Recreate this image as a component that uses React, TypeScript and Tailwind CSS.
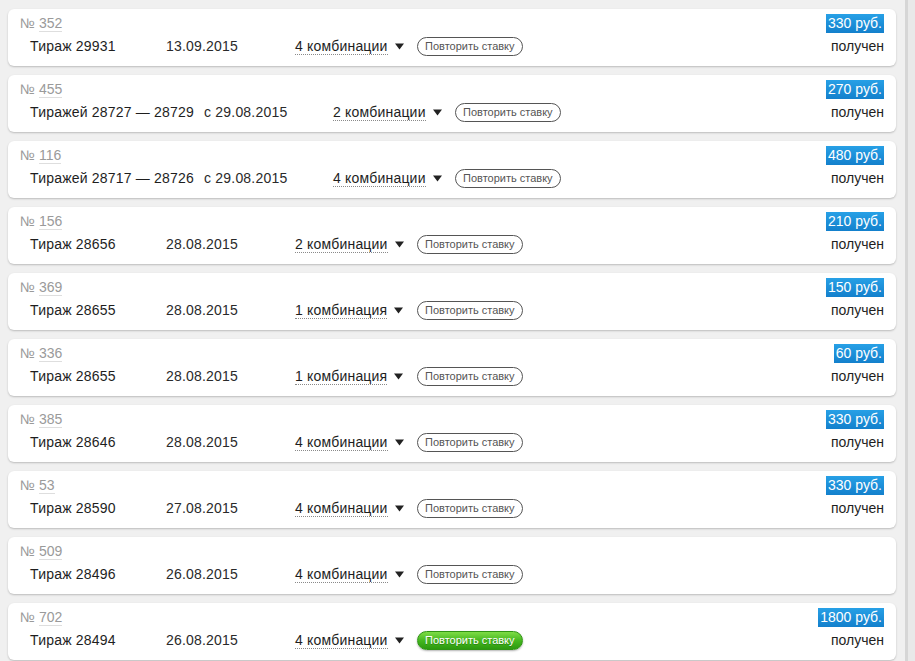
import React from 'react';

type Bet = {
  id: number;
  draw: string;
  date: string;
  combos: string;
  prize?: number;
  active?: boolean;
};

const bets: Bet[] = [
  { id: 352, draw: 'Тираж 29931', date: '13.09.2015', combos: '4 комбинации', prize: 330 },
  { id: 455, draw: 'Тиражей 28727 — 28729', date: 'с 29.08.2015', combos: '2 комбинации', prize: 270 },
  { id: 116, draw: 'Тиражей 28717 — 28726', date: 'с 29.08.2015', combos: '4 комбинации', prize: 480 },
  { id: 156, draw: 'Тираж 28656', date: '28.08.2015', combos: '2 комбинации', prize: 210 },
  { id: 369, draw: 'Тираж 28655', date: '28.08.2015', combos: '1 комбинация', prize: 150 },
  { id: 336, draw: 'Тираж 28655', date: '28.08.2015', combos: '1 комбинация', prize: 60 },
  { id: 385, draw: 'Тираж 28646', date: '28.08.2015', combos: '4 комбинации', prize: 330 },
  { id: 53, draw: 'Тираж 28590', date: '27.08.2015', combos: '4 комбинации', prize: 330 },
  { id: 509, draw: 'Тираж 28496', date: '26.08.2015', combos: '4 комбинации' },
  { id: 702, draw: 'Тираж 28494', date: '26.08.2015', combos: '4 комбинации', prize: 1800, active: true },
];

const Arrow = () => (
  <svg width="9" height="7" viewBox="0 0 9 7" className="ml-[7px]">
    <path d="M0 0.5 H9 L4.5 6.5 Z" fill="#222" />
  </svg>
);

const BetCard: React.FC<{ bet: Bet }> = ({ bet }) => (
  <div className="flex h-[57px] rounded-[6px] bg-white pt-[5px] pb-[10px] pl-[12px] pr-[12px] shadow-[0_1px_2px_rgba(0,0,0,0.22)]">
    <div className="flex flex-1 flex-col gap-[4px]">
      <div className="flex h-[19px] items-center text-[14px] text-[#9a9a9a]">
        <span>№</span>
        <span className="ml-[4px] border-b border-[#dedede] leading-[15px]">{bet.id}</span>
      </div>
      <div className="flex h-[19px] items-center pl-[10px] text-[14px] tracking-[0.2px] text-[#1e1e1e]">
        <span className="min-w-[136px] pr-[10px]">{bet.draw}</span>
        <span className="w-[129px] text-[#2a2a2a]">{bet.date}</span>
        <span className="flex w-[122px] items-center">
          <span className="border-b border-dotted border-[#8a8a8a] leading-[15px]">{bet.combos}</span>
          <Arrow />
        </span>
        {bet.active ? (
          <button className="flex h-[19px] items-center rounded-full border border-[#2f9414] bg-gradient-to-b from-[#7ddc45] via-[#45b81f] to-[#2c9a0f] px-[7px] text-[11px] tracking-normal text-white shadow-[0_1px_2px_rgba(0,0,0,0.3)] [text-shadow:0_1px_0_rgba(0,0,0,0.25)]">
            Повторить ставку
          </button>
        ) : (
          <button className="flex h-[19px] items-center rounded-full border border-[#555] bg-white px-[7px] text-[11px] tracking-normal text-[#555]">
            Повторить ставку
          </button>
        )}
      </div>
    </div>
    <div className="flex flex-col items-end gap-[4px]">
      <div className="flex h-[19px] items-center">
        {bet.prize !== undefined && (
          <span className="flex h-[19px] items-center bg-gradient-to-b from-[#27a0e6] to-[#1380cc] px-[2px] text-[14px] text-white">
            {bet.prize} руб.
          </span>
        )}
      </div>
      {bet.prize !== undefined && (
        <div className="flex h-[19px] items-center text-[14px] text-[#1e1e1e]">получен</div>
      )}
    </div>
  </div>
);

export default function App() {
  return (
    <div className="flex min-h-[661px] w-[915px] bg-[#f0f0f0] font-['Liberation_Sans',Arial,sans-serif]">
      <div className="flex flex-1 flex-col gap-[9px] pt-[9px] pb-[8px] pl-[8px] pr-[9px]">
        {bets.map((bet) => (
          <BetCard key={bet.id} bet={bet} />
        ))}
      </div>
      <div className="w-[3px] bg-[#d6d6d6]" />
      <div className="w-[7px] bg-[#e9e9e9]" />
    </div>
  );
}
